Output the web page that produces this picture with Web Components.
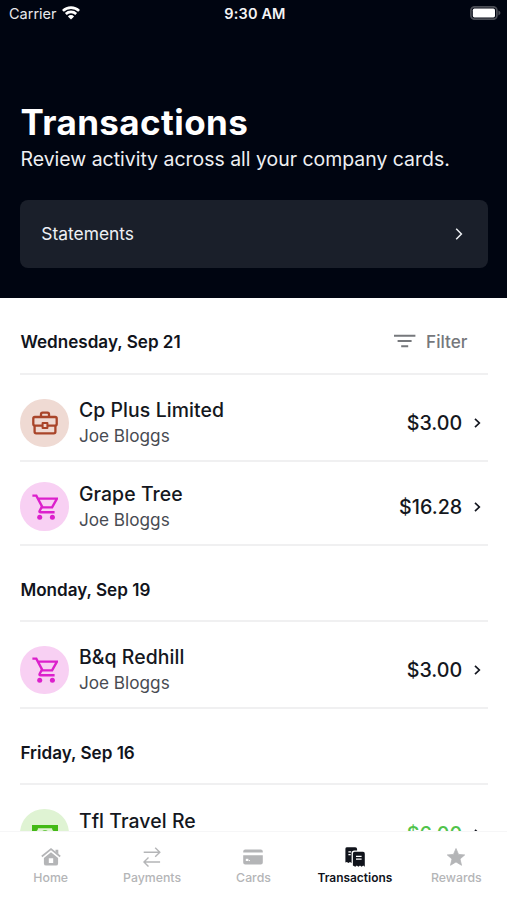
<!DOCTYPE html>
<html lang="en">
<head>
<meta charset="utf-8">
<title>Transactions</title>
<style>
html,body{margin:0;height:100%;overflow:hidden;background:#fff}
</style>
</head>
<body>
<transactions-screen></transactions-screen>
<script>
const ICONS = {
  briefcase: '<svg viewBox="0 0 26 24" width="26" height="24" fill="none" stroke="currentColor" stroke-width="2.3" stroke-linejoin="round"><path d="M9 6V3.2Q9 1.6 10.6 1.6h4.8Q17 1.6 17 3.2V6"/><rect x="1.3" y="6" width="23.4" height="8.6" rx="1.6"/><path d="M2.6 14.6v6.2Q2.6 22.4 4.2 22.4h17.6q1.6 0 1.6-1.6v-6.2"/><rect x="10.6" y="12.1" width="4.8" height="4.8" fill="#efdad3" stroke-width="2"/></svg>',
  cart: '<svg viewBox="0 0 26 26" width="26" height="26"><g fill="none" stroke="currentColor" stroke-width="2.4"><path d="M.4 1.6h3.9l6.2 11.8h9.6l4.9-8.8H5.8"/><path d="M10 12.6l-2.3 4.1q-.8 1.6.9 1.6H22.6"/></g><circle cx="7.7" cy="23.3" r="2.5" fill="currentColor"/><circle cx="20.4" cy="23.3" r="2.5" fill="currentColor"/></svg>',
  cash: '<svg viewBox="0 0 26 18" width="26" height="18"><path fill="currentColor" fill-rule="evenodd" d="M0 0h26v18H0zM6 3.2A3.7 3.7 0 0 1 2.6 6.6v5A3.7 3.7 0 0 1 6 15h14a3.7 3.7 0 0 1 3.4-3.4v-5A3.7 3.7 0 0 1 20 3.2z"/><circle cx="13" cy="9" r="3.8" fill="currentColor"/><path d="M11.6 8q1.4-1.5 2.8 0" stroke="#dff3d3" fill="none"/></svg>',
  home: '<svg viewBox="0 0 20 20" width="20" height="20"><path d="M.8 9.5 10 2.1l9.2 7.4" fill="none" stroke="currentColor" stroke-width="1.7"/><path d="M14.5 2.7h2.8v4.6l-2.8-2.2z" fill="currentColor"/><path fill="currentColor" fill-rule="evenodd" d="M10 5.2 17.1 11v5.4q0 2.2-2.2 2.2H5.1q-2.2 0-2.2-2.2V11zM7.8 11.3v4.8h4.4v-4.8z"/></svg>',
  payments: '<svg viewBox="0 0 20 20" width="20" height="20" fill="none" stroke="currentColor" stroke-width="1.4"><path d="M1.7 5.2h16M13.2.7l4.6 4.5-4.6 4.5M18.1 15H2M6.5 10.6 2 15l4.5 4.4"/></svg>',
  cards: '<svg viewBox="0 0 20 20" width="20" height="20"><path fill="currentColor" d="M2.2 2.6h15.6q2 0 2 2V5.5H.2V4.6q0-2 2-2zM.2 8.3h19.6v7.2q0 2-2 2H2.2q-2 0-2-2z"/><path d="M2.8 12.9h2.6" stroke="#fff" stroke-width="2.2"/><path d="M5.8 13.6h1.2" stroke="#fff" stroke-width="1"/></svg>',
  transactions: '<svg viewBox="0 0 20 20" width="20" height="20"><path fill="currentColor" d="M1.8.2h8.4q1.9 0 1.9 2v1.4H9.3Q6.6 3.6 6.6 6.3V16l-1.6-1-1.6 1-1.5-1.1-1.5.7V2Q.2.2 1.8.2z"/><path fill="currentColor" d="M9.6 4.8h8.4q1.8 0 1.8 2v12.9l-1.6-1.2-1.6 1.2-1.6-1.2-1.6 1.2-1.6-1.2-1.5 1.2-2.4-1.2V6.8q0-2 1.7-2z"/><path d="M3.4 4.9h2.8M3.4 7.6h2.3M11 9.4h5.6M11 12.1h5.6" stroke="#fff" stroke-width="1.1"/></svg>',
  rewards: '<svg viewBox="0 0 20 20" width="20" height="20"><path fill="currentColor" stroke="currentColor" stroke-width=".8" stroke-linejoin="round" d="M10 1.5 12.5 7.4l6.2.5-4.7 4.1 1.5 6.3-5.5-3.4-5.5 3.4L6 12 1.3 7.9l6.2-.5z"/></svg>',
  chevron: '<svg viewBox="0 0 8 12" width="8" height="12" fill="none" stroke="currentColor" stroke-width="1.5"><path d="M1.2.8 6.4 6l-5.2 5.2"/></svg>',
  small: '<svg viewBox="0 0 8 12" width="8" height="12" fill="none" stroke="currentColor" stroke-width="1.7"><path d="M1 1.9 5.3 6 1 10.1"/></svg>',
  filter: '<svg viewBox="0 0 22 14" width="22" height="14" stroke="currentColor" stroke-width="2"><path d="M0 1.8h21.4M3.6 7.1h14M7.2 12.3h7"/></svg>',
  wifi: '<svg viewBox="0 0 18 14" width="18" height="14"><g fill="none" stroke="#fff" stroke-width="2.6"><path d="M.9 4.9a11.6 11.6 0 0 1 16.2 0"/><path d="M3.8 8a7.5 7.5 0 0 1 10.4 0"/></g><path fill="#fff" d="M9 13.6 5.9 10.4a4.4 4.4 0 0 1 6.2 0z"/></svg>',
  battery: '<svg viewBox="0 0 31 14" width="31" height="14"><rect x=".9" y=".8" width="26" height="12.4" rx="3.6" fill="none" stroke="#4b4e56" stroke-width="1.7"/><rect x="2.8" y="2.6" width="22.2" height="8.8" rx="1.6" fill="#fff"/><path d="M28.4 4.6q2.1 1 2.1 2.4t-2.1 2.4z" fill="#4b4e56"/></svg>'
};
function define(name, render){
  customElements.define(name, class extends HTMLElement{
    connectedCallback(){
      if(this.shadowRoot) return;
      this.attachShadow({mode:'open'}).innerHTML = '<style>*{box-sizing:border-box}svg{display:block}:host{box-sizing:border-box;white-space:nowrap}</style>' + render(this);
    }
  });
}
const attr = (el, n) => (el.getAttribute(n) || '').replace(/&/g,'&amp;');

define('ui-icon', el => `<style>:host{display:block;flex:none}</style>${ICONS[el.getAttribute('name')]}`);

define('status-bar', () => `<style>
:host{display:grid;grid-template-columns:1fr auto 1fr;align-items:center;height:28px;padding:0 6px 2px 9px;font-size:14.5px;color:#e8e9ec}
.l{display:flex;align-items:center;gap:5px}
.c{font-weight:600;letter-spacing:.15px;color:#f4f4f6}
.r{justify-self:end}
ui-icon{margin-top:-1px}
</style><div class="l"><span>Carrier</span><ui-icon name="wifi"></ui-icon></div><div class="c">9:30 AM</div><ui-icon class="r" name="battery"></ui-icon>`);

define('page-header', () => `<style>
:host{display:block;height:297.5px;background:#000511;color:#fff}
h1{margin:72px 0 0 20.5px;font-size:35px;line-height:44px;font-weight:700;letter-spacing:.4px}
p{margin:3px 0 0 20.5px;font-size:19.45px;line-height:24px;color:#eeeff2}
.card{display:flex;justify-content:space-between;align-items:center;margin:29.3px 19.5px 0 20.3px;height:68px;padding:0 24.5px 0 21px;border-radius:8px;background:#1a1f2a;font-size:17.4px;color:#eef0f4}
.card span{margin-top:-2px}
</style><status-bar></status-bar><h1>Transactions</h1><p>Review activity across all your company cards.</p>
<div class="card"><span>Statements</span><ui-icon name="chevron"></ui-icon></div>`);

define('day-heading', el => `<style>
:host{display:flex;justify-content:space-between;align-items:center;height:75.7px;padding:13px 20px 0 0;border-bottom:2px solid #f0f0f1;font-size:17.1px;font-weight:600;color:#11141c}
:host([first]){padding-top:11px}
</style><span>${attr(el,'label')}</span><slot></slot>`);

define('filter-button', () => `<style>
:host{display:flex;align-items:center;gap:10.5px;color:#76787c;font-weight:500;font-size:17.2px}
</style><ui-icon name="filter"></ui-icon><span>Filter</span>`);

define('transaction-row', el => `<style>
:host{display:flex;align-items:center;height:83.6px;padding:7px 6px 0 0;border-bottom:2px solid #f0f0f1;color:#141720}
.b{display:flex;align-items:center;justify-content:center;width:48.5px;height:48.5px;border-radius:50%;margin-right:10px;flex:none}
.briefcase{background:#efdad3;color:#a9452a}.cart{background:#f8d0f3;color:#dc20cc}.cash{background:#dff3d3;color:#43b916}
.t{flex:1}.n{font-size:19.4px;line-height:26px;font-weight:500;letter-spacing:.1px}
.s{font-size:17.2px;line-height:26px;color:#484b52}
.a{font-size:19.7px;font-weight:500;margin-right:11.3px}.a.green{color:#51c34b}
</style><div class="b ${attr(el,'icon')}"><ui-icon name="${attr(el,'icon')}"></ui-icon></div>
<div class="t"><div class="n">${attr(el,'name')}</div><div class="s">Joe Bloggs</div></div>
<div class="a ${attr(el,'tone')}">${attr(el,'amount')}</div><ui-icon name="small"></ui-icon>`);

define('transaction-group', () => `<style>
:host{display:block}.rows{padding-top:4.2px}
</style><slot name="heading"></slot><div class="rows"><slot></slot></div>`);

define('tab-item', el => `<style>
:host{display:flex;flex-direction:column;align-items:center;gap:2px;font-size:12.3px;line-height:17px;font-weight:500;color:#b4b5b7}
:host([active]){color:#10131b;font-weight:600;font-size:11.95px}
</style><ui-icon name="${attr(el,'icon')}"></ui-icon><span>${attr(el,'label')}</span>`);

define('tab-bar', () => `<style>
:host{display:grid;grid-template-columns:repeat(5,1fr);height:69px;padding-top:15px;background:#fff;border-top:1px solid #f6f6f7}
</style><tab-item icon="home" label="Home"></tab-item><tab-item icon="payments" label="Payments"></tab-item><tab-item icon="cards" label="Cards"></tab-item><tab-item icon="transactions" label="Transactions" active></tab-item><tab-item icon="rewards" label="Rewards"></tab-item>`);

define('transactions-screen', () => `<style>
:host{display:flex;flex-direction:column;height:900px;width:507px;overflow:hidden;background:#fff;font-family:Inter,"Liberation Sans",sans-serif}
page-header,tab-bar{flex:none}
main{flex:1;min-height:0;overflow:hidden;padding:1.4px 19.5px 0 20.4px}
</style><page-header></page-header>
<main>
<transaction-group><day-heading first slot="heading" label="Wednesday, Sep 21"><filter-button></filter-button></day-heading>
<transaction-row icon="briefcase" name="Cp Plus Limited" amount="$3.00"></transaction-row>
<transaction-row icon="cart" name="Grape Tree" amount="$16.28"></transaction-row></transaction-group>
<transaction-group><day-heading slot="heading" label="Monday, Sep 19"></day-heading>
<transaction-row icon="cart" name="B&amp;q Redhill" amount="$3.00"></transaction-row></transaction-group>
<transaction-group><day-heading slot="heading" label="Friday, Sep 16"></day-heading>
<transaction-row icon="cash" name="Tfl Travel Re" amount="$6.00" tone="green"></transaction-row></transaction-group>
</main><tab-bar></tab-bar>`);
</script>
</body>
</html>
